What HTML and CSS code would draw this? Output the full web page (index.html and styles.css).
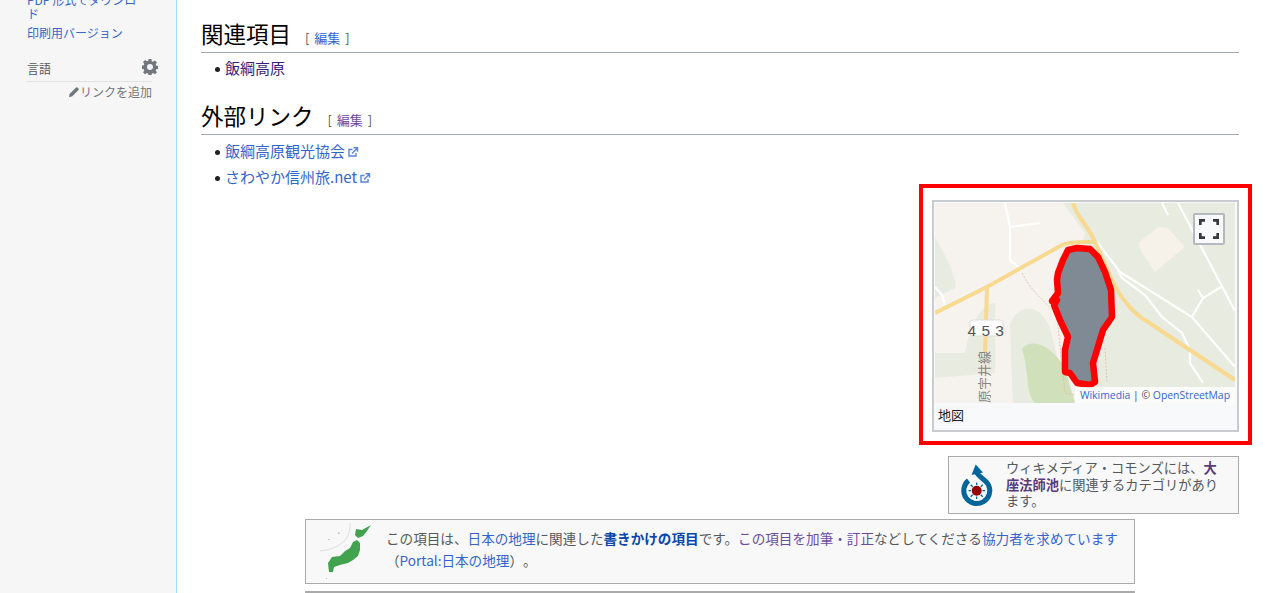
FILE: index.html
```html
<!DOCTYPE html>
<html lang="ja">
<head>
<meta charset="utf-8">
<title>大座法師池</title>
<link rel="stylesheet" href="styles.css">
</head>
<body>
<div class="page">
  <aside class="sidebar">
    <ul class="tools">
      <li><a href="#">PDF 形式でダウンロード</a></li>
      <li><a href="#">印刷用バージョン</a></li>
    </ul>
    <div class="lang-head">
      <span>言語</span>
      <svg class="gear" viewBox="0 0 20 20" width="16" height="16"><path fill="#72777d" fill-rule="evenodd" d="M8.200 0h3.600l.5 2.700 1.600.7 2.300-1.600 2.500 2.500-1.600 2.300.7 1.600 2.700.5v3.600l-2.700.5-.7 1.600 1.600 2.300-2.500 2.500-2.300-1.600-1.600.7-.5 2.700H8.200l-.5-2.700-1.600-.7-2.300 1.600-2.500-2.500 1.600-2.300-.7-1.600-2.700-.5V8.200l2.700-.5.7-1.600-1.600-2.300 2.500-2.500 2.300 1.600 1.600-.7zM10 6.300a3.700 3.700 0 1 0 0 7.400 3.700 3.700 0 0 0 0-7.400z"/></svg>
    </div>
    <div class="add-link">
      <svg viewBox="0 0 12 12" width="12" height="12"><path fill="#72777d" d="M1 11l.6-3L8 1.500a1 1 0 0 1 1.400 0l1.100 1.100a1 1 0 0 1 0 1.400L4 10.400z"/></svg>
      <a href="#">リンクを追加</a>
    </div>
  </aside>
  <main class="content">
    <h2 class="heading heading-first">関連項目<span class="edit">[ <a href="#">編集</a> ]</span></h2>
    <ul class="list list-first">
      <li><a class="visited-dark" href="#">飯綱高原</a></li>
    </ul>
    <h2 class="heading heading-second">外部リンク<span class="edit">[ <a class="visited" href="#">編集</a> ]</span></h2>
    <ul class="list">
      <li><a href="#" class="ext">飯綱高原観光協会<svg viewBox="0 0 12 12" width="12" height="12"><path fill="none" stroke="#5b84d6" stroke-width="1.400" d="M9 7v3H2V3.500h3.500M5 7.500l5-5M6.500 1.800h4v4"/></svg></a></li>
      <li><a href="#" class="ext">さわやか信州旅.net<svg viewBox="0 0 12 12" width="12" height="12"><path fill="none" stroke="#5b84d6" stroke-width="1.400" d="M9 7v3H2V3.500h3.500M5 7.500l5-5M6.500 1.800h4v4"/></svg></a></li>
    </ul>
    <div class="side-stack">
      <figure class="map-frame">
        <div class="map">
          <svg viewBox="0 0 300 200" width="300" height="200">
            <g class="map-art">
              <rect width="300" height="200" fill="#f6f3ef"/>
              <path fill="#e8ebdf" d="M128 0H300V200H145L145 50 150 30z"/>
              <path fill="#e8ebdf" d="M0 35C10 50 22 75 20 85L0 95zM30 150C35 125 45 100 60 100V170L0 175V150z"/>
              <path fill="#e8ebdf" d="M75 120C85 100 105 100 115 125L135 205H78z"/>
              <path fill="#cfe0bb" d="M87 146C95 135 115 140 130 165L140 200H100C90 190 95 170 87 146z"/>
              <path fill="#f6f2ea" d="M203 40 223 24 233 25 250 44 220 69 207 50z"/>
              <g fill="none" stroke="#fff" stroke-width="2.200">
                <path d="M70 0 75 24 75 57 87 67M75 24 105 20"/>
                <path d="M0 84 7 92 10 102"/>
                <path d="M162 39 185 69 257 114 300 164"/>
                <path d="M183 67 187 75 210 92 227 114 247 130 255 147 255 160 268 180"/>
                <path d="M243 0 300 108M227 0 233 12"/>
                <path d="M257 114 268 95 286 84M268 95 263 87"/>
              </g>
              <g fill="none" stroke="#e0b99c" stroke-width=".8" stroke-dasharray="2 1.500">
                <path d="M87 70C100 95 115 100 122 115L130 190 140 192M170 145 172 180"/>
              </g>
              <g fill="none" stroke="#f7d98f" stroke-width="4">
                <path d="M0 110 50 85 127 42C135 38 150 39 160 39"/>
                <path d="M138 0C142 15 155 25 160 39L177 77C185 95 200 112 213 119L300 177"/>
                <path d="M52 85 50 150"/>
              </g>
              <path fill="#7f8a94" stroke="#f00" stroke-width="6.500" stroke-linejoin="round" d="M133 47 142 45 155 46 163 54 170 69 176 87 177 114 168 127 162 147 158 160 160 179 155 182 142 180 135 170 130 169 130 147 133 134 125 117 119 102 122 97 117 98 123 90 122 77 123 70 128 57z"/>
              <rect x="35" y="117" width="33" height="16" rx="3" fill="#fff" stroke="#ddd"/>
            </g>
            <text class="shield-text" x="51" y="133" text-anchor="middle">4 5 3</text>
            <text class="road-text" transform="translate(54 200) rotate(-90)">原宇井線</text>
          </svg>
          <button class="full" type="button" aria-label="全画面">
            <svg viewBox="0 0 20 20" width="20" height="20"><path fill="none" stroke="#36383c" stroke-width="2.700" d="M1.300 6V1.300H6M14 1.300h4.700V6M18.700 14v4.700H14M6 18.700H1.300V14"/></svg>
          </button>
          <div class="attr"><a href="#">Wikimedia</a> | © <a href="#">OpenStreetMap</a></div>
        </div>
        <figcaption class="caption">地図</figcaption>
      </figure>
      <div class="commons">
        <svg class="commons-logo" viewBox="0 0 45 50" width="45" height="50">
          <path fill="none" stroke="#069" stroke-width="5" d="M13.500 20.500A13 13 0 1 0 33.500 25C31 20 25 18 22 13"/>
          <path fill="#069" d="M20.700 4.500 28 12.500 16.500 15z"/>
          <circle cx="21.700" cy="30.700" r="5" fill="#970302"/>
          <g stroke="#069" stroke-width="1.300"><path d="M21.700 22.500v2.500M21.700 36.500v2.500M13.500 30.700h2.500M27.500 30.700h2.500M15.700 24.700l2 2M25.700 34.700l2 2M15.700 36.700l2-2M25.700 26.700l2-2"/></g>
        </svg>
        <p>ウィキメディア・コモンズには、<a class="visited-bold" href="#">大座法師池</a>に関連するカテゴリがあります。</p>
      </div>
    </div>
    <div class="stub">
      <svg class="japan" viewBox="0 0 62 62" width="62" height="62">
        <path fill="none" stroke="#ddd" d="M35 3C36 15 30 28 5 31"/>
        <g class="japan-land">
          <path fill="#2f9a3c" d="M41 9 47 10 56 5 52 11 48 16 43 18 40 15zM42 20 45 23 45 30 43 36 38 40 33 43 25 45 19 47 18 52 14 52 13 43 17 37 25 36 30 31 35 28 38 22z"/>
        </g>
        <path fill="#bbb" d="M23 12.500h1.500v1.500H23zM13 19h1.500v1H13zM11 58h1v1h-1z"/>
      </svg>
      <p>この項目は、<a href="#">日本の地理</a>に関連した<a class="strong" href="#">書きかけの項目</a>です。<a class="visited" href="#">この項目を加筆・訂正</a>などしてくださる<a href="#">協力者を求めています</a>（<a href="#">Portal:日本の地理</a>）。</p>
    </div>
    <div class="next-box"></div>
  </main>
</div>
<div class="highlight"></div>
</body>
</html>
```
FILE: styles.css
```css
* { box-sizing: border-box; }
html, body { margin: 0; height: 593px; overflow: hidden; background: #fff; }
body { font-family: "Noto Sans CJK JP", "Noto Sans", sans-serif; color: #202122; text-spacing-trim: space-all; }
a { color: #36c; text-decoration: none; }
.page { display: flex; height: 593px; overflow: hidden; }
.sidebar { width: 177px; flex: none; background: #f6f6f6; border-right: 1px solid #a7d7f9; padding: 0 24px 0 27px; font-size: 12px; line-height: 14px; }
.tools { list-style: none; margin: -7px 0 0; padding: 0; }
.tools li { margin-bottom: 5px; line-height: 14px; }
.lang-head { display: flex; justify-content: space-between; align-items: center; margin-top: 20px; height: 16px; color: #54595d; }
.lang-head span { margin-top: 2px; }
.gear { margin-top: -2px; margin-right: -6px; }
.add-link { margin-top: 5px; border-top: 1px solid #e2e2e2; padding-top: 3px; display: flex; justify-content: flex-end; align-items: center; }
.add-link a { color: #72777d; }
.content { flex: 1; min-width: 0; padding: 0 24px; font-size: 15px; position: relative; }
.heading { font-weight: 400; font-size: 22.5px; line-height: 26px; margin: 0; color: #000; border-bottom: 1px solid #a2a9b1; height: 33px; }
.heading-first { margin-top: 20px; }
.heading-second { margin-top: 17px; }
.edit { font-size: 13px; color: #54595d; margin-left: 14px; word-spacing: 2px; }
.list { margin: 0; padding: 3px 0 0 14px; font-size: 15px; line-height: 26px; list-style: none; }
.list li::before { content: ""; display: inline-block; width: 5px; height: 5px; border-radius: 50%; background: #202122; margin-right: 5px; vertical-align: 2px; }
.list-first { padding-top: 2px; height: 32px; }
.visited-dark { color: #3b1a7a; }
.visited { color: #6b4ba1; }
.ext svg { vertical-align: -1px; margin-left: 2px; }
.side-stack { width: 307px; margin: 0 0 0 auto; padding-top: 10px; }
.map-frame { margin: 0; width: 307px; height: 232px; border: 2px solid #c8ccd1; background: #f8f9fa; padding: 1px 2px 0 1px; }
.map { position: relative; width: 300px; height: 200px; }
.map svg { display: block; }
.map-art { filter: blur(.4px); }
.shield-text { font: 15.5px "Liberation Sans", sans-serif; fill: #555; letter-spacing: .5px; }
.road-text { font-size: 13px; fill: #8a8580; }
.full { position: absolute; top: 10px; right: 10px; width: 32px; height: 32px; padding: 0; display: flex; align-items: center; justify-content: center; background: #f8f9fa; border: 2px solid #b4b9c0; border-radius: 2px; }
.attr { position: absolute; right: 0; bottom: 0; padding: 0 5px; height: 16px; background: rgba(255,255,255,.8); font: 10.4px/16px "Open Sans", "Liberation Sans", sans-serif; color: #444; }
.caption { font-size: 13px; padding: 1px 3px; line-height: 22px; color: #202122; }
.commons { margin: 24px 0 0 16px; width: 291px; height: 58px; border: 1px solid #aaa; background: #f8f8f8; display: flex; padding: 3px 14px 0 6px; font-size: 13.25px; line-height: 16.5px; color: #54595d; }
.commons-logo { flex: none; margin: 0 6px 0 0; }
.commons p { margin: 0; }
.visited-bold { color: #5a3a7a; font-weight: 700; }
.stub { width: 830px; margin: 5px auto 0; height: 65px; display: flex; background: #f8f8f8; border: 1px solid #aaa; padding: 7px 8px 0 9px; font-size: 13.6px; line-height: 22px; color: #54595d; }
.japan { flex: none; margin: -7px 9px 0 0; }
.japan-land { filter: blur(.35px); opacity: .9; }
.stub p { margin: 0; }
.strong { font-weight: 700; color: #0645ad; }
.next-box { width: 830px; margin: 7px auto 0; height: 40px; border: 2px solid #aaa; background: #f8f8f8; }
.highlight { position: absolute; left: 919px; top: 184px; width: 333px; height: 261px; border: 4px solid #f00; pointer-events: none; }
```
